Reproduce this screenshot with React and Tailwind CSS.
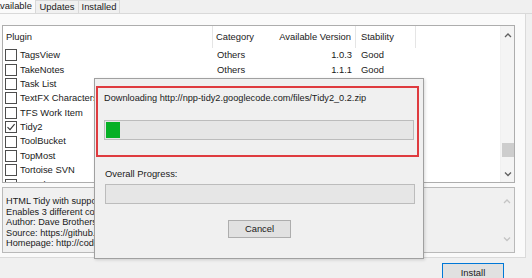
import React from "react";

const rows = [
  { name: "TagsView", cat: "Others", ver: "1.0.3", stab: "Good" },
  { name: "TakeNotes", cat: "Others", ver: "1.1.1", stab: "Good" },
  { name: "Task List" },
  { name: "TextFX Characters" },
  { name: "TFS Work Item" },
  { name: "Tidy2", checked: true },
  { name: "ToolBucket" },
  { name: "TopMost" },
  { name: "Tortoise SVN" },
  { name: "Translate" },
];

function Check({ checked }) {
  return (
    <div className="w-[12px] h-[12px] border border-[#4d4d4d] bg-white flex items-center justify-center shrink-0">
      {checked && (
        <svg width="10" height="10" viewBox="0 0 10 10">
          <path d="M1.5 5.2 L4 7.6 L8.6 2.2" fill="none" stroke="#333" strokeWidth="1.1" />
        </svg>
      )}
    </div>
  );
}

function Chevron({ up, color = "#606060" }) {
  return (
    <svg width="8" height="6" viewBox="0 0 8 6">
      <path d={up ? "M1 5 L4 2 L7 5" : "M1 1.5 L4 4.5 L7 1.5"} fill="none" stroke={color} strokeWidth="1.3" />
    </svg>
  );
}

export default function App() {
  return (
    <div
      className="relative w-[532px] h-[278px] overflow-hidden bg-[#f0f0f0] text-[9.4px] text-[#1a1a1a]"
      style={{ fontFamily: '"Liberation Sans", Arial, sans-serif' }}
    >
      {/* tabs */}
      <div className="flex h-[14px] items-end border-b border-[#d9d9d9]">
        <div className="-ml-[7px] h-[14px] w-[43px] bg-[#fafafa] border-r border-[#d9d9d9] flex items-center pl-[1px] leading-none">
          Available
        </div>
        <div className="h-[13px] w-[43px] border-r border-t border-[#d9d9d9] flex items-center justify-center leading-none">
          Updates
        </div>
        <div className="h-[13px] w-[41px] border-r border-t border-[#d9d9d9] flex items-center justify-center leading-none">
          Installed
        </div>
      </div>

      {/* panel */}
      <div className="w-[526px] h-[244px] bg-[#fafafa] border-r border-b border-[#dadada] pt-[11px] pl-[2px]">
        {/* list view */}
        <div className="w-[513px] h-[158px] border border-[#adadad] bg-white flex overflow-hidden">
          <div className="flex-1 flex flex-col overflow-hidden">
            <div className="h-[22px] flex items-center shrink-0 whitespace-nowrap">
              <div className="w-[210px] h-full pl-[3px] flex items-center border-r border-[#e5e5e5]">Plugin</div>
              <div className="w-[66px] h-full pl-[3px] flex items-center">Category</div>
              <div className="w-[77px] h-full pr-[4px] flex items-center justify-end border-r border-[#e5e5e5]">Available Version</div>
              <div className="w-[60px] h-full pl-[5px] flex items-center border-r border-[#e5e5e5]">Stability</div>
            </div>
            {rows.map((r) => (
              <div key={r.name} className="h-[14.4px] flex items-center shrink-0 whitespace-nowrap">
                <div className="w-[210px] pl-[2px] flex items-center gap-[3px]">
                  <Check checked={r.checked} />
                  <span>{r.name}</span>
                </div>
                <div className="w-[66px] pl-[4px]">{r.cat}</div>
                <div className="w-[77px] pr-[4px] text-right">{r.ver}</div>
                <div className="w-[60px] pl-[5px]">{r.stab}</div>
              </div>
            ))}
          </div>
          <div className="w-[14px] bg-[#f4f4f4] border-l border-[#f0f0f0] flex flex-col items-center">
            <div className="h-[17px] flex items-center justify-center">
              <Chevron up />
            </div>
            <div className="flex-1 w-full flex flex-col">
              <div className="h-[100px]" />
              <div className="h-[14px] w-[12px] ml-[1px] bg-[#cdcdcd]" />
            </div>
            <div className="h-[17px] flex items-center justify-center">
              <Chevron />
            </div>
          </div>
        </div>

        {/* description */}
        <div className="mt-[4px] w-[513px] h-[66px] border border-[#b9b9b9] bg-[#f0f0f0] flex">
          <div className="flex-1 pl-[3px] pt-[8px] leading-[10.5px] text-[9.2px] whitespace-nowrap overflow-hidden">
            <div>HTML Tidy with support for HTML5</div>
            <div>Enables 3 different configurations</div>
            <div>Author: Dave Brotherstone</div>
            <div>Source: https://github.com/</div>
            <div>Homepage: http://code.google.com</div>
          </div>
          <div className="w-[14px] flex flex-col items-center justify-between py-[10px]">
            <Chevron up color="#c4c4c4" />
            <Chevron color="#c4c4c4" />
          </div>
        </div>
      </div>

      {/* install button */}
      <div className="absolute left-[442px] top-[263px] w-[62px] h-[20px] border border-[#0078d7] bg-[#e1e1e1] flex items-start justify-center pt-[3px]">
        <div className="border border-[#e1e1e1] leading-none">Install</div>
      </div>

      {/* download dialog */}
      <div className="absolute left-[94px] top-[78px] w-[330px] h-[181px] bg-[#f0f0f0] border border-[#a0a0a0] shadow-[1px_1px_3px_rgba(0,0,0,0.15)] pt-[7px] pl-[1px] flex flex-col">
        <div className="w-[323px] h-[71px] border-2 border-[#df3b3f] pl-[6px] pt-[5px]">
          <div className="leading-[11px] whitespace-nowrap text-[9.2px]">
            Downloading http://npp-tidy2.googlecode.com/files/Tidy2_0.2.zip
          </div>
          <div className="mt-[16px] w-[310px] h-[20px] border border-[#bcbcbc] bg-[#e6e6e6] p-[1px]">
            <div className="w-[14px] h-full bg-[#06b025]" />
          </div>
        </div>
        <div className="pl-[9px] mt-[11px] leading-[11px]">Overall Progress:</div>
        <div className="ml-[9px] mt-[5px] w-[310px] h-[20px] border border-[#bcbcbc] bg-[#e6e6e6]" />
        <div className="mt-[16px] self-center w-[63px] h-[18px] border border-[#adadad] bg-[#e1e1e1] flex items-center justify-center leading-none">
          Cancel
        </div>
      </div>
    </div>
  );
}
